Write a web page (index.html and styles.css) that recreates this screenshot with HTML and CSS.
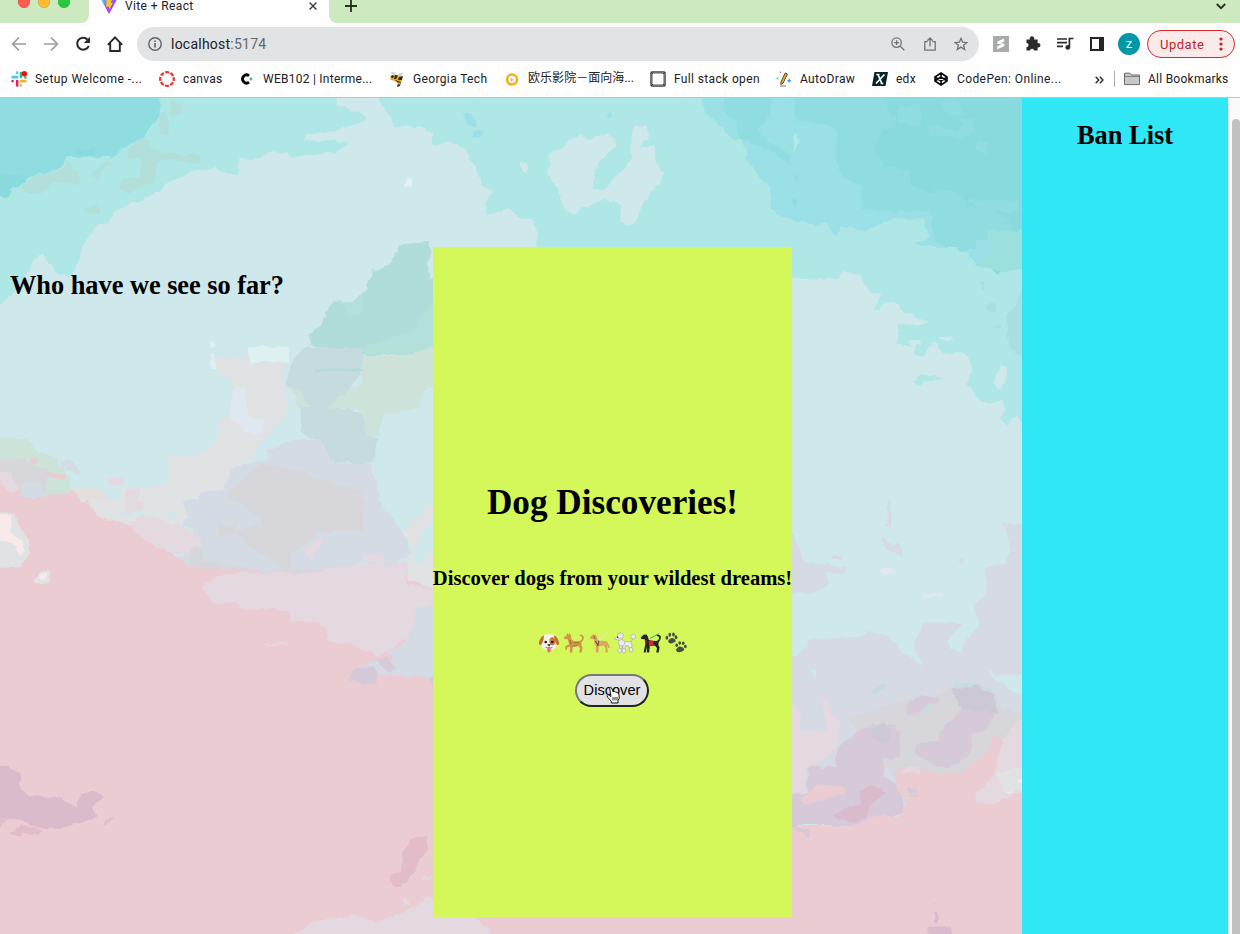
FILE: index.html
```html
<!DOCTYPE html>
<html lang="en">
<head>
<meta charset="utf-8">
<title>Vite + React</title>
<link rel="stylesheet" href="styles.css">
</head>
<body>
<header class="chrome">
  <div class="tabstrip">
    <div class="lights">
      <svg width="89" height="23" viewBox="0 0 89 23"><circle cx="24" cy="2" r="5.7" fill="#ff5b51" stroke="#e2463f" stroke-width=".7"/><circle cx="44" cy="2" r="5.7" fill="#fdbc2e" stroke="#dfa023" stroke-width=".7"/><circle cx="64" cy="2" r="5.7" fill="#28c93f" stroke="#1dab2e" stroke-width=".7"/></svg>
    </div>
    <div class="tab">
      <svg class="vite" width="16" height="16" viewBox="0 0 16 16"><defs><linearGradient id="v" x1="0" y1="0" x2="1" y2="1"><stop offset="0" stop-color="#41d1ff"/><stop offset=".55" stop-color="#a13dfe"/><stop offset="1" stop-color="#bd34fe"/></linearGradient></defs><path d="M0 1.2 8 16 16 1.2 8.5 2.6Z" fill="url(#v)"/><path d="M5.5 1 11 0 9.8 5 12 4.8 7.7 12.5 8 8.6 5.3 9Z" fill="#ffc71c"/></svg>
      <span class="tab-title">Vite + React</span>
      <svg class="tab-close" width="8" height="8" viewBox="0 0 8 8"><path d="M.6.6 7.4 7.4M7.4.6.6 7.4" stroke="#3b3d3f" stroke-width="1.4"/></svg>
    </div>
    <div class="strip-rest">
      <svg width="12" height="12" viewBox="0 0 12 12"><path d="M6 0V12M0 6H12" stroke="#28301f" stroke-width="1.8"/></svg>
      <svg width="10" height="7" viewBox="0 0 10 7"><path d="M.8 1 5 5.2 9.2 1" fill="none" stroke="#28301f" stroke-width="1.8"/></svg>
    </div>
  </div>

  <div class="toolbar">
    <div class="nav">
      <svg width="16" height="16" viewBox="0 0 16 16" fill="none" stroke="#9c9d9f" stroke-width="1.7"><path d="M15 8H2M8 1.5 1.6 8 8 14.5"/></svg>
      <svg width="16" height="16" viewBox="0 0 16 16" fill="none" stroke="#9c9d9f" stroke-width="1.7"><path d="M1 8H14M8 1.5 14.4 8 8 14.5"/></svg>
      <svg width="16" height="16" viewBox="0 0 16 16"><path d="M12.6 3.6A6 6 0 1 0 13.8 9.8" fill="none" stroke="#26282a" stroke-width="2"/><path d="M15 .8V7H8.8Z" fill="#26282a"/></svg>
      <svg width="16" height="16" viewBox="0 0 16 16" fill="none" stroke="#26282a" stroke-width="1.9"><path d="M3.2 7V15H12.8V7M.8 8.8 8 1.4 15.2 8.8"/></svg>
    </div>
    <div class="omnibox">
      <svg width="14" height="14" viewBox="0 0 14 14"><circle cx="7" cy="7" r="6.2" fill="none" stroke="#5f6368" stroke-width="1.4"/><path d="M7 6V10.6M7 3.4V4.9" stroke="#5f6368" stroke-width="1.6"/></svg>
      <span class="url">localhost<span class="port">:5174</span></span>
      <div class="omni-icons">
        <svg width="14" height="14" viewBox="0 0 14 14" fill="none" stroke="#717477" stroke-width="1.3"><circle cx="5.6" cy="5.6" r="4.7"/><path d="M9 9 13.3 13.3M3.2 5.6H8M5.6 3.2V8"/></svg>
        <svg width="12" height="14" viewBox="0 0 12 14" fill="none" stroke="#717477" stroke-width="1.3"><path d="M3.5 4.7H.8V13.2H11.2V4.7H8.5M6 9.5V1.2M3.3 3.7 6 1 8.7 3.7"/></svg>
        <svg width="14" height="14" viewBox="0 0 14 14" fill="none" stroke="#717477" stroke-width="1.3"><path d="M7 1.3 8.6 5.2 12.9 5.5 9.6 8.2 10.7 12.5 7 10.1 3.3 12.5 4.4 8.2 1.1 5.5 5.4 5.2Z"/></svg>
      </div>
    </div>
    <div class="extensions">
      <svg width="16" height="16" viewBox="0 0 16 16"><path d="M0 0H16V16H0Z" fill="#a9aaab"/><path d="M11 2.5 4.5 5.6 4.2 7.8 8.5 8.3 4.2 10.6V13.3L11.2 10.2 11.6 7.7 7.6 7.2 11.4 5.2Z" fill="#fff"/></svg>
      <svg width="16" height="16" viewBox="0 0 16 16"><path d="M1.5 3.6H4.9A2.3 2.3 0 1 1 9.1 3.6H12.6V7.2A2.2 2.2 0 1 1 12.6 11.4V14.6H9.2A2.2 2.2 0 0 0 4.9 14.6H1.5V11.2A2.1 2.1 0 0 0 1.5 7Z" fill="#292b2d"/></svg>
      <svg width="17" height="14" viewBox="0 0 17 14"><path d="M0 2H10M0 5.7H10M0 9.4H6" stroke="#292b2d" stroke-width="1.7"/><path d="M12.4 10V1.5H16.5" fill="none" stroke="#292b2d" stroke-width="1.7"/><circle cx="10.8" cy="10.4" r="2.4" fill="#292b2d"/></svg>
      <svg width="14" height="14" viewBox="0 0 14 14"><path d="M0 0H14V14H0Z" fill="#242628"/><path d="M2 2H9V12H2Z" fill="#fff"/></svg>
    </div>
    <div class="avatar">z</div>
    <div class="update"><span>Update</span><svg width="4" height="14" viewBox="0 0 4 14" fill="#c5221f"><circle cx="2" cy="2" r="1.6"/><circle cx="2" cy="7" r="1.6"/><circle cx="2" cy="12" r="1.6"/></svg></div>
  </div>

  <nav class="bookmarks">
    <div class="bm"><svg width="16" height="16" viewBox="0 0 16 16" fill="none" stroke-width="2.6" stroke-linecap="round"><path d="M6.2 1.6V1.7M1.6 6.1H6.2" stroke="#42cbed"/><path d="M10 6.1V2M14.4 6.3V6.4" stroke="#31b780"/><path d="M1.6 10V10.1M6.2 10V14.4" stroke="#e01e5a"/><path d="M10 10.1H14.4M10 14.3V14.4" stroke="#ecb22e"/><circle cx="13.4" cy="2.8" r="2.7" fill="#f10e10" stroke="none"/></svg><span class="ls3">Setup Welcome -...</span></div>
    <div class="bm"><svg width="16" height="16" viewBox="0 0 16 16"><circle cx="8" cy="8" r="6.8" fill="none" stroke="#e33a2c" stroke-width="2.3" stroke-dasharray="4 1.34" stroke-dashoffset="2"/></svg><span>canvas</span></div>
    <div class="bm"><svg width="16" height="16" viewBox="0 0 16 16"><path d="M10 4.8A4 4 0 1 0 10 11.2" fill="none" stroke="#07080a" stroke-width="2.8"/><circle cx="12" cy="8" r="1.4" fill="#3dbb84"/></svg><span>WEB102 | Interme...</span></div>
    <div class="bm"><svg width="16" height="16" viewBox="0 0 16 16"><path d="M1 1.5 5 1 8 4 11 2 14 1.5 12 6 8 6Z" fill="#d0d0d0"/><path d="M1 7 4 4 8 4.5 12 7 13 10 9 12 6 10 2 9Z" fill="#e5a823"/><path d="M1.5 5 4 4 5 6 3 7.3ZM6 4 9 4.5 7 8 5 8ZM10 6 14 5 13 9 9 9ZM6 9 12 11 11 15 8 16 9 12Z" fill="#34291d"/><path d="M8 11 12 12 10 14Z" fill="#e5a823"/></svg><span class="ls3">Georgia Tech</span></div>
    <div class="bm"><svg width="16" height="16" viewBox="0 0 16 16"><circle cx="8" cy="8.6" r="5" fill="none" stroke="#f6ae18" stroke-width="2.5"/><path d="M6.8 6.9 9.8 8.7 6.8 10.5Z" fill="#f6ae18"/></svg><span class="cjk">欧乐影院－面向海...</span></div>
    <div class="bm"><svg width="16" height="16" viewBox="0 0 16 16" fill="none"><rect x="1" y="1" width="14" height="14" rx="1" stroke="#444" stroke-width="1.5"/><rect x="2.5" y="2.5" width="11" height="11" stroke="#aaa" stroke-width="1"/><path d="M1 1 3 3M15 1 13 3M1 15 3 13M15 15 13 13" stroke="#333"/></svg><span class="ls3">Full stack open</span></div>
    <div class="bm"><svg width="16" height="16" viewBox="0 0 16 16"><path d="M5 11 9.2 2 11.4 3 7.2 12 4.8 13.4Z" fill="#f4ae25" stroke="#3c3b38" stroke-width=".9"/><path d="M4 15H10" stroke="#777"/><circle cx="1.5" cy="7.5" r="1.1" fill="#61d57b"/><circle cx="4.5" cy="1.3" r=".8" fill="#ee5649"/><path d="M13.2 7.8V11.4M11.4 9.6H15" stroke="#4595f5" stroke-width="1.4"/></svg><span class="ls3">AutoDraw</span></div>
    <div class="bm"><svg width="16" height="16" viewBox="0 0 16 16"><path d="M2.5 1H16L13.5 15H0Z" fill="#04262b"/><path d="M4.4 3.5H7.4M6 3.5 9.8 12.5M8.6 12.5H11.2M12.4 3.5 4 12.5" fill="none" stroke="#fff" stroke-width="1.7"/></svg><span>edx</span></div>
    <div class="bm"><svg width="16" height="16" viewBox="0 0 16 16" fill="none" stroke="#090a0b" stroke-width="1.6"><path d="M8 2 14 6V10L8 14 2 10V6ZM2 6 8 10 14 6M2 10 8 6 14 10M8 2V6M8 10V14"/></svg><span class="ls4">CodePen: Online...</span></div>
    <svg class="more" width="9" height="8" viewBox="0 0 9 8" fill="none" stroke="#303234" stroke-width="1.5"><path d="M.7.8 3.7 4 .7 7.2M4.9.8 7.9 4 4.9 7.2"/></svg>
    <div class="all"><svg width="16" height="14" viewBox="0 0 16 14"><path d="M.5 1.2H6L7.4 3H15.5V12.6H.5Z" fill="#c8c8c8" stroke="#696b6e"/><path d="M1 4.5H15" stroke="#696b6e" stroke-width=".8"/></svg><span>All Bookmarks</span></div>
  </nav>
</header>

<main class="page">
  <svg class="sky" viewBox="0 98 1022 836" preserveAspectRatio="none" aria-hidden="true">
    <defs><filter id="rough" filterUnits="userSpaceOnUse" x="-20" y="78" width="1062" height="876" color-interpolation-filters="sRGB"><feTurbulence type="fractalNoise" baseFrequency=".09" numOctaves="3" seed="4"/><feDisplacementMap in="SourceGraphic" scale="7" xChannelSelector="R" yChannelSelector="G"/></filter></defs>
    <g filter="url(#rough)">
      <path d="M-20 78H1042V954H-20Z" fill="#cee8eb"/>
      <!-- upper left sky -->
      <g transform="translate(0 97) scale(.33333)">
        <path fill="#afe6e6" d="M-40-40H1000L1010 25 1060 40 1100 60 1090 75 1030 95 915 115 910 130 1045 135 1010 165 900 178 820 165 760 185 715 185 715 235 650 215 570 225 500 262 460 300 380 320 340 350 330 375 290 385 260 430 215 535 180 530 150 500 130 470 95 490 85 530 30 600-40 650ZM1120-40H1330V125L1270 90 1180 88 1180 60 1150 40Z"/>
        <path fill="#90dde1" d="M-40-40H475L480 55 440 110 380 150 330 180 205 180 180 215 90 240 30 275 25 300-40 300Z"/>
        <path fill="#88dadd" d="M-40 235 20 230 70 235 80 250 30 275 20 300-40 300ZM235 155 280 150 285 175 225 175Z"/>
        <path fill="#b2dfda" d="M100 240 180 220 200 200 235 225 235 260 170 255 120 290 80 290 60 270ZM380 165 420 120 450 125 440 155 500 170 600 175 590 200 500 190 470 200 465 250 420 275 390 290 360 280 360 250 420 240 425 185 390 190ZM480 50 500 40 510 120 485 110ZM250 330 300 320 300 350 265 350ZM280 220 330 190 340 205 300 225 300 250 280 245ZM510 15 545 20 550 50 515 55Z"/>
        <path fill="#b0dcd9" d="M1330 440 1250 435 1195 450 1165 500 1115 525 1100 580 1050 620 1005 612 975 650 965 685 930 710 935 740 1000 775 1225 775 1330 735Z"/>
        <path fill="#b3e1d9" d="M1015 605 1050 625 1090 590 1085 650 1055 660ZM1330 590 1280 640 1240 700 1090 750 1095 770 1225 775 1330 735Z"/>
        <path fill="#c6dbde" d="M905 750H1090V800L1060 870 980 930 1090 945 1100 1000 1130 1030 1120 1098H1000L970 1040 905 1010 905 940 860 850 880 790Z"/>
        <path fill="#cde3da" d="M1095 775H1220L1330 735V860L1270 880 1260 930 1150 955 1135 1020 1100 1020 1090 940 980 930 1080 860ZM870 870 900 880 935 930 900 925Z"/>
        <path fill="#b0dcd9" d="M945 815H1090V822H945Z"/>
        <path fill="#e1e2e4" d="M640 780H745L750 805 840 790 860 890 855 950 830 990 780 1030 770 1080 700 1120 670 1180 600 1190 540 1290H380L360 1170 480 1170 510 1140 500 1080 600 1070 660 1020 650 980 690 950 700 860 650 825Z"/>
        <path fill="#dff0f0" d="M745 750H865L870 795 800 790 750 805ZM632 770H646V820H632ZM630 733H640V752H630Z"/>
        <path fill="#dfe7f0" d="M700 870 740 870 745 950 790 970 790 1005 760 1015 690 970Z"/>
        <path fill="#d5dbe4" d="M805 1060 880 1025 960 1030 1000 1100 1110 1100 1140 1200 1160 1290H545L600 1190 670 1180 700 1110 800 1090Z"/>
        <path fill="#d7d7db" d="M690 1180 780 1100 900 1120 990 1160 1080 1180 1090 1290H620L680 1200Z"/>
        <path fill="#cbe3d9" d="M-40 1025H80L110 1060 170 1080 210 1150 215 1180 130 1200-40 1190Z"/>
        <path fill="#d7d7db" d="M-40 1080 60 1090 140 1120 135 1190 95 1205 60 1185-40 1130Z"/>
        <path fill="#ebccd2" d="M-40 1110 0 1125 60 1170 100 1205 220 1180 300 1290H-40ZM88 1082H112V1100H88ZM135 1132H200V1142H135Z"/>
        <path fill="#e4d9e1" d="M375 1175H415L430 1260H375ZM320 1140H370V1160H320ZM0 1125H30L60 1175 40 1185 0 1165Z"/>
        <path fill="#d5dbe4" d="M185 1090 215 1095 240 1120 230 1135 190 1110ZM65 1160H130V1200H65Z"/>
        <path fill="#e3e0dc" d="M215 1175 300 1175 350 1230 360 1270H290L240 1200Z"/>
        <path fill="#e2f1f1" d="M1216 245H1236V268H1216Z"/>
      </g>
      <!-- lower left clouds -->
      <g transform="translate(0 500) scale(.33333)">
        <path fill="#ebccd2" d="M-40 0H265L300 50 390 75 430 115 520 165 570 200H2400V1380H-40Z"/>
        <path fill="#e1e2e4" d="M265 0H560L545 70 500 80 440 50 390 60 350 68 300 50Z"/>
        <path fill="#cee8eb" d="M360 36H445V45H360ZM505 35H530V52H505Z"/>
        <path fill="#e4d9e1" d="M605 260 640 232 720 220 860 215 950 220 1015 195 1220 190V250L1330 275V300L1245 400 1180 440 1130 470 1050 430 980 425 980 385 940 365 870 362 865 330 720 325 715 310 640 310ZM385 70 430 45 540 75 610 115 690 130 680 170 530 165 430 120ZM375 0H430V35H375ZM795 430H865V436H795Z"/>
        <path fill="#d5dbe4" d="M545 0H1140L1190 70 1215 100 1235 170 1170 200 1090 190 1010 200 950 215H790L690 205 570 200 530 175 600 150 610 115 580 110Z"/>
        <path fill="#d7d7db" d="M710 0H1090V90L950 95 920 130 870 160 870 200 940 220 870 225 810 175 760 150 720 110 710 90 790 70ZM575 145H610V180L680 190 780 212 720 212 570 200ZM650 70H710V105H650Z"/>
        <path fill="#cee8eb" d="M1140 0H1330L1205 80 1180 50Z"/>
        <path fill="#e1e2e4" d="M1330 0 1280 20 1220 80 1215 110 1240 145 1280 150 1330 180V275L1225 240 1220 190 1235 150Z"/>
        <path fill="#cee8eb" d="M1235 145 1280 150 1285 180 1240 188Z"/>
        <path fill="#e4d9e1" d="M915 150 960 110 970 120 930 190ZM1085 155 1150 170 1150 195 1090 185Z"/>
        <path fill="#d5dbe4" d="M1330 300 1250 320 1245 370 1210 430 1165 450 1190 480 1110 488 1090 500 1140 525 1330 535Z"/>
        <path fill="#d7cad8" d="M1045 535 1070 505 1120 502 1135 545 1095 552ZM1135 480 1160 470 1188 505 1165 522ZM1285 530H1330V560H1300Z"/>
        <path fill="#d9bbcb" d="M-40 800 20 797 62 825 60 870 90 890 165 890 235 920 240 880 290 875 310 895 275 920 292 950 240 970 180 988 90 980 60 955-40 950Z"/>
        <path fill="#e3bcca" d="M-40 955H30L0 985ZM30 1000 60 975 80 985 130 990 110 1003 70 998 50 1012ZM1230 1020 1285 1010 1280 1050 1230 1130 1200 1162 1165 1150 1170 1125 1205 1120 1212 1050ZM312 975 330 950H342L320 975Z"/>
        <path fill="#e1e2e4" d="M-40 40H45L50 80 90 115 90 160 60 200-40 205ZM95 245 130 208 158 212 140 248Z"/>
        <path fill="#f8e9ea" d="M-40 45H38L30 100 75 120 75 150 60 170 45 150 50 135 20 125-40 120ZM118 220H145V225L130 240Z"/>
        <path fill="#e4d9e1" d="M850 1320 920 1280 980 1255 1070 1245 1130 1270 1200 1240 1280 1195 1400 1220 1500 1330ZM1208 1200H1225V1218H1208ZM1265 1132 1299 1130 1275 1150Z"/>
      </g>
      <!-- upper right sky -->
      <g transform="translate(433 97) scale(.38265)">
        <path fill="#afe6e6" d="M0-40H1590V480H0Z"/>
        <path fill="#cee8eb" d="M-10 125 50 118 85 140 110 185 130 235 155 245 135 275 140 310 200 290 220 315 260 320 275 350 270 385 300 440 330 475H-10ZM305 150 385 95 405 110 460 98 482 125 445 160 420 190 425 240 440 248 490 200 515 160 515 115 525 80 562 78 560 110 548 110 545 135 578 125 582 170 602 200 575 245 545 285 530 325 508 340 490 325 490 285 450 265 390 290 370 305 345 295 325 240 303 200ZM222 168 240 168 255 182 245 200 235 195Z"/>
        <path fill="#afe6e6" d="M90 450 130 430 160 422 200 435 205 460H90Z"/>
        <path fill="#9ae0e6" d="M82 42 100 45 115 70 110 80 85 65ZM105 90H130V105H105ZM456 38H466V55H456ZM705-40 707 40 740 60 775 105 805 110 830 175 880 235 885 290 905 315 1000 335 1030 330 1052 368 1070 335 1130 350 1200 318 1285 320 1300 370 1250 380 1320 420 1360 430 1400 480H1590V-40Z"/>
        <path fill="#90dde1" d="M760-40H890L880 50 850 80 870 110 900 130 935 150 935 180 880 140 800 110 790 60 760 40ZM935-40H1590V480H1440L1370 420 1310 370 1300 300 1120 295 1120 230 1070 210 1050 150 1055 80 950 60ZM943 205H957V220H943ZM935 265H952L945 290Z"/>
        <path fill="#88dadd" d="M1185-40H1590V340L1540 370 1500 320 1470 300 1400 290 1380 255 1290 250 1250 230 1240 190 1180 180 1150 130 1180 90 1210 80 1210 50 1190 45Z"/>
        <path fill="#90dde1" d="M1215 25H1275V70H1215ZM1285 75 1330 75 1370 90 1390 70 1370 55 1410 60 1410 90 1380 110 1300 100ZM1325 10 1370 10 1390 40 1360 50 1330 30ZM1420 115H1450V150L1420 135ZM1310 245H1370V255H1310ZM1400 270H1530V300L1430 295Z"/>
        <path fill="#b4e9e8" d="M943 110 955 95V130L945 145Z"/>
        <path fill="#9be0dc" d="M1450 350 1590 350V480H1450Z"/>
      </g>
      <!-- right side -->
      <g transform="translate(790 240) scale(.33333)">
        <path fill="#cee8eb" d="M-80 80H750V1080H-80Z"/>
        <path fill="#afe6e6" d="M-60 20H480L750 40V565L696 550 680 525 650 555 630 530 650 510 640 480 595 495 560 470 530 430 550 390 525 340 465 340 430 305 400 350 370 345 370 320 390 318 390 303 360 303 360 320 320 310 325 250 420 255 360 220 325 210 320 195 285 190 255 215 270 165 240 150 210 110 165 90 145 115-60 118ZM370 420 390 405H440V415H460V422H400L390 435Z"/>
        <path fill="#9ae0e6" d="M490 0H610V45L560 80 530 40Z"/>
        <path fill="#90dde1" d="M490 0H560L555 30 510 30Z"/>
        <path fill="#9be0dc" d="M600 0H750V93H620L555 75 600 40Z"/>
        <path fill="#88dadd" d="M605 88H635L625 105Z"/>
        <path fill="#a8dfe0" d="M690 155H750V355L680 345 645 290 650 240ZM585 193H612V220H600ZM570 120 585 122 585 150 575 150ZM612 258H632V266H612Z"/>
        <path fill="#cee8eb" d="M632 370 650 385 650 425 628 450 610 425ZM448 295 485 293V303H448Z"/>
        <path fill="#d6dae4" d="M-60 880H10L25 910 45 970 170 980 165 1010 120 1070H-60ZM643 850H750V1070H565L590 980 650 970 660 920ZM293 780H300V862L285 855 293 850ZM278 890 310 920 325 905 338 935 335 950 285 925ZM120 960 137 940 160 960ZM508 960 520 950 522 970Z"/>
        <path fill="#dfe7f0" d="M267 983 300 982 328 1000 320 1018 280 1005Z"/>
      </g>
      <!-- lower right clouds -->
      <g transform="translate(790 580) scale(.33333)">
        <path fill="#d6dae4" d="M-60 20H750V700H-60Z"/>
        <path fill="#cee8eb" d="M110-20H585L590 30 550 90 570 130 520 190 510 215 480 210 480 170 520 130 400 130 370 190 395 260 330 210 300 170 240 155 200 175 60 180 20 230-60 240V40H60L110 20ZM60 265 80 265 70 295ZM590 265 620 290 750 275V345L660 340 640 310 600 290Z"/>
        <path fill="#dfe7f0" d="M397 38H463V51H397Z"/>
        <path fill="#d7d7db" d="M180 415 250 390 340 360 450 345 480 330 500 310 600 330 640 390 750 400V600H330L270 550 200 450Z"/>
        <path fill="#c6dbde" d="M480 315 530 308 600 325 620 355 560 350ZM245 330 285 310 295 320 250 348ZM375 350 400 345V355ZM395 378H425V390H395Z"/>
        <path fill="#ccc9d5" d="M480 325 560 320 605 345 625 400 520 405 500 360Z"/>
        <path fill="#d7cad8" d="M345 375 375 350 450 350 445 372 400 378 390 400 345 402ZM510 390 620 395 580 455 545 460 545 520 480 565 430 555 370 520 380 490 450 485 450 460ZM200 455 245 432 310 432 330 460V530L280 535 275 590 330 610 340 700 220 735-60 735V640L55 640V560L140 560V500Z"/>
        <path fill="#ccc9d5" d="M245 445 280 430 305 450 300 480 275 490 245 475Z"/>
        <path fill="#e4d9e1" d="M-60 370H15L30 400 30 450 110 455 100 380 90 350 115 370 125 400 150 430 140 490 105 540 50 560 50 640-60 640Z"/>
        <path fill="#ebccd2" d="M-60 740 210 735 240 705 330 710 345 670 320 620 325 565 400 565 450 580 520 575 600 500 610 455 635 480 660 540 750 560V1120H-60ZM30 660 90 610 165 620 165 645 50 670Z"/>
        <path fill="#e4d9e1" d="M635 480 680 430 750 370V660L690 640 610 670 555 668 560 640 600 600 620 555ZM340 565 390 562 395 578 335 583Z"/>
        <path fill="#e1e2e4" d="M620 580 680 565 750 575V640L640 635Z"/>
        <path fill="#f8e9ea" d="M685 600H750V608H685ZM650 635H670V640H650Z"/>
        <path fill="#d9bbcb" d="M125 715 150 690 210 670 210 630 250 617 285 635 240 680 230 705 200 730ZM415 1038 480 1035 490 1100H415ZM430 1000H440V1025H430ZM432 967H440L434 977Z"/>
        <path fill="#d7cad8" d="M355 625H383V638H355ZM358 642 383 640V650H358ZM10 735 60 755 55 770 40 765Z"/>
      </g>
    </g>
  </svg>

  <section class="seen"><h2>Who have we see so far?</h2></section>
  <section class="card">
    <h1>Dog Discoveries!</h1>
    <h3>Discover dogs from your wildest dreams!</h3>
    <div class="dogs">
      <svg width="22" height="22" viewBox="0 0 22 22"><path d="M5 4Q11 0 17 4L19 12Q18 18 11 18.5 4 18 3 12Z" fill="#f6f3ee"/><path d="M6 3.5Q2.5 4 .8 11 1 14 3.5 12.5L5.5 8ZM16 3.5Q19.5 4 21.2 11 21 14 18.5 12.5L16.5 8Z" fill="#c0712f"/><ellipse cx="14.4" cy="9.3" rx="3" ry="4" fill="#c77b3b"/><circle cx="7.7" cy="10" r="1.3" fill="#241b18"/><circle cx="14.3" cy="10" r="1.3" fill="#241b18"/><path d="M9 12.2H13L11 14.6Z" fill="#2b2223"/><path d="M7.5 15.2Q9.5 17 11 15 12.5 17 14.5 15.2" stroke="#65504a" stroke-width=".8" fill="none"/><ellipse cx="11" cy="18" rx="1.9" ry="2.5" fill="#f26b86"/></svg>
      <svg width="22" height="22" viewBox="0 0 22 22"><path d="M.8 5.5 3.5 3.4 4.2 1 5.5 2.8 6.8 1.2 8 4 8.6 7.4 11 9.2 16.5 9Q20 7.5 18.7 4.5L16.2 3.8 17.5 2.6Q20.7 3 21 5.6 20.6 8.4 18.6 10.2L18.4 13 19.6 15.5 18.6 20.6H16.2L17 16 14.8 13.4 9.8 14.2 9.2 20.6H6.8L7 14.6 4.2 15.4 4 18 2.2 17.6 2.6 14 6 12.6 4.8 7.2 1.4 7Z" fill="#d0954d"/><path d="M7 8 8 12M11 10.5 16 11M9.6 14.4 14.6 13.6" stroke="#a3682f" fill="none"/></svg>
      <svg width="22" height="22" viewBox="0 0 22 22"><path d="M.8 5.5 3.5 2.8 6.6 2.6 8 5 8.6 7.4 11 8.8 17 9 18.8 10.5 21 15.8 19.8 16.6 18.3 13.6 18.8 20.6H16.4L16.6 16.4 14.8 13.6 9.8 14.2 9.4 20.6H6.8L7 14.6 5.4 11.6 4.8 7.2 1.4 7Z" fill="#d7a760"/><path d="M9 10 18 .8" stroke="#e1e4d0" stroke-width="1.2"/><path d="M6.2 9 9.6 13.6M10 8.6 8.6 14.2" stroke="#755636" stroke-width="1.2"/><path d="M4.6 3.6 6 7" stroke="#a8733a" stroke-width="1.4"/></svg>
      <svg width="22" height="22" viewBox="0 0 22 22"><g fill="#ebeaee" stroke="#a29fa9" stroke-width=".6"><path d="M.8 6.2 4 4 8 6 8 9 11 9.6 16.8 9.6 18 12.5 17.6 16H15.6L14 13.6 11 14 11 18H8.8V14L6.8 18H5L6 12.4 5 8 1.4 7.4Z"/><path d="M17 10 19.2 6"/><circle cx="6.3" cy="3.7" r="3"/><circle cx="7.6" cy="10.8" r="3.2"/><circle cx="19.2" cy="4.6" r="2.5"/><ellipse cx="5.7" cy="18.4" rx="1.9" ry="2.2"/><ellipse cx="10" cy="18.8" rx="1.9" ry="2.2"/><ellipse cx="17" cy="17.8" rx="2" ry="2.4"/></g><circle cx="3.6" cy="5.2" r=".7" fill="#333"/></svg>
      <svg width="22" height="22" viewBox="0 0 22 22"><path d="M.8 5.5 3.5 2.8 6.6 2.6 8 5 8.6 7.4 11 8.8 16.5 9Q20 7.5 18.7 4.5L16.2 3.8 17.5 2.6Q20.7 3 21 5.6 20.6 8.4 18.6 10.2L18.4 13 19.6 15.5 18.6 20.6H16.2L17 16 14.8 13.4 9.8 14.2 9.2 20.6H6.8L7 14.6 5.6 20.6H3.6L5.2 12.6 4.8 7.2 1.4 7Z" fill="#252425"/><path d="M10 6.5 19 1.4" stroke="#55b873" stroke-width="1.1"/><path d="M6 8V12.5M9.4 8.8 13 9.2V13L9.4 13.6Z" stroke="#d22b3d" stroke-width="1" fill="#d22b3d"/></svg>
      <svg width="22" height="22" viewBox="0 0 22 22" fill="#4b4d47"><path d="M3 9Q6 4 9.5 7 12 9 9 10.5 4 13 3 9ZM11 18Q13 13 17 15 21 17 18 19 12 22 11 18Z"/><ellipse cx="1.9" cy="5.8" rx="1.4" ry="2"/><ellipse cx="4.8" cy="2.7" rx="1.4" ry="2"/><ellipse cx="8.5" cy="2.5" rx="1.4" ry="2"/><ellipse cx="11" cy="5.2" rx="1.4" ry="2"/><ellipse cx="11.7" cy="13.2" rx="1.4" ry="1.8"/><ellipse cx="14.7" cy="11" rx="1.4" ry="1.8"/><ellipse cx="18.2" cy="11.3" rx="1.4" ry="1.8"/><ellipse cx="20.3" cy="14.5" rx="1.4" ry="1.8"/></svg>
    </div>
    <button class="discover">Discover
      <svg class="hand" width="16" height="18" viewBox="0 0 16 18"><path d="M4.6 2Q5.3.6 6.5 1.9L8.2 6 8.4 5.4Q9.6 5 10.2 6.2L10.5 5.9Q11.8 5.6 12.2 7L12.5 6.9Q13.8 7 14 8.8L14.2 12.4 13 14.6V17H6.4V15.4L2.6 11.2Q1.2 9 2.8 8.6 3.8 8.6 6 10.6Z" fill="#fff" stroke="#111" stroke-width="1"/><path d="M8 11V14.4M10 11V14.4M12 11V14.4" stroke="#111" stroke-width=".9"/></svg>
    </button>
  </section>
  <aside class="ban"><h2>Ban List</h2></aside>
  <div class="scrollbar"><div class="thumb"></div></div>
</main>
</body>
</html>
```
FILE: styles.css
```css
* { box-sizing: border-box; }
body { margin: 0; width: 1240px; height: 934px; overflow: hidden; display: flex; flex-direction: column; }
svg { display: block; flex: none; }
h1, h2, h3 { margin: 0; font-family: "Liberation Serif", serif; color: #000; white-space: nowrap; }

.chrome { height: 98px; background: #fefefe; border-bottom: 1px solid #c3c1c2; font-family: Roboto, "Noto Sans CJK SC", sans-serif; color: #202124; }
.tabstrip { height: 23px; display: flex; background: #fefefe; }
.lights { width: 89px; background: #cce9bf; border-bottom-right-radius: 8px; }
.tab { width: 240px; display: flex; align-items: flex-start; padding-left: 12px; }
.vite { margin-top: -2px; }
.tab-title { margin-left: 8px; font-size: 12px; line-height: 14px; margin-top: -1px; letter-spacing: .38px; flex: 1; }
.tab-close { margin: 2px 12px 0 0; }
.strip-rest { flex: 1; display: flex; justify-content: space-between; background: #cce9bf; border-bottom-left-radius: 8px; padding: 0 14px 0 16px; }
.strip-rest svg:last-child { margin-top: 3px; }

.toolbar { height: 42px; display: flex; align-items: center; padding-left: 11px; }
.nav { display: flex; gap: 16px; width: 126px; }
.omnibox { width: 842px; height: 34px; border-radius: 17px; background: #e1e3e5; display: flex; align-items: center; padding: 0 11px; }
.url { margin-left: 9px; font-size: 14px; letter-spacing: .23px; }
.port { color: #65686c; }
.omni-icons { margin-left: auto; display: flex; align-items: center; gap: 18.5px; }
.extensions { margin-left: 14px; display: flex; align-items: center; gap: 16px; width: 125px; }
.avatar { width: 22px; height: 22px; border-radius: 50%; background: #0097a7; color: #fff; font-size: 13px; line-height: 21px; text-align: center; }
.update { margin-left: 7px; width: 88px; height: 28px; border: 1px solid #cf2e28; border-radius: 14px; background: #faebea; color: #c5221f; font-size: 13px; letter-spacing: .5px; display: flex; align-items: center; justify-content: space-between; padding: 0 11px 0 12px; }

.bookmarks { height: 28px; display: grid; grid-template-columns: 148px 80px 150px 115px 146px 126px 96px 61px 162px 19px 107px; align-items: center; padding-left: 11px; font-size: 12px; letter-spacing: .25px; white-space: nowrap; }
.bm { display: flex; align-items: center; gap: 8px; }
.ls3 { letter-spacing: .36px; }
.bm:first-child .ls3 { letter-spacing: .45px; }
.ls4 { letter-spacing: .4px; }
.cjk { line-height: 14px; margin-top: -2px; letter-spacing: .05px; }
.more { margin-top: 1px; }
.all { display: flex; align-items: center; gap: 8px; border-left: 1px solid #a9abad; padding-left: 9px; height: 16px; }

.page { flex: 1; position: relative; display: grid; grid-template-columns: 433px 359px 230px 206px 12px; background: #cee8eb; overflow: hidden; }
.sky { position: absolute; left: 0; top: 0; width: 1022px; height: 836px; }
.seen { position: relative; padding: 172px 0 0 10px; }
.seen h2, .ban h2 { font-size: 26.4px; line-height: 30px; }
.seen h2 { letter-spacing: -.04px; }
.card { position: relative; margin-top: 149px; height: 670px; background: #d4f85a; display: flex; flex-direction: column; align-items: center; }
.card h1 { margin-top: 236px; font-size: 35.2px; line-height: 40px; }
.card h3 { margin-top: 43px; font-size: 20.6px; line-height: 24px; }
.dogs { display: flex; gap: 3.6px; margin-top: 42px; }
.discover { position: relative; left: -.5px; margin-top: 20px; width: 74px; height: 33px; padding: 0 0 2px; border: 2px outset #777; border-radius: 17px; background: #e2e2e4; font: 14.6px "Liberation Sans", sans-serif; color: #000; }
.hand { position: absolute; left: 28px; top: 10px; }
.ban { position: relative; grid-column: 4; background: #2fe7f5; text-align: center; padding-top: 22px; }
.scrollbar { background: #fafafa; border-left: 1px solid #e6e6e6; padding: 21px 0 0 3px; }
.thumb { height: 830px; background: #c1c1c1; border-radius: 5px 5px 0 0; }
```
